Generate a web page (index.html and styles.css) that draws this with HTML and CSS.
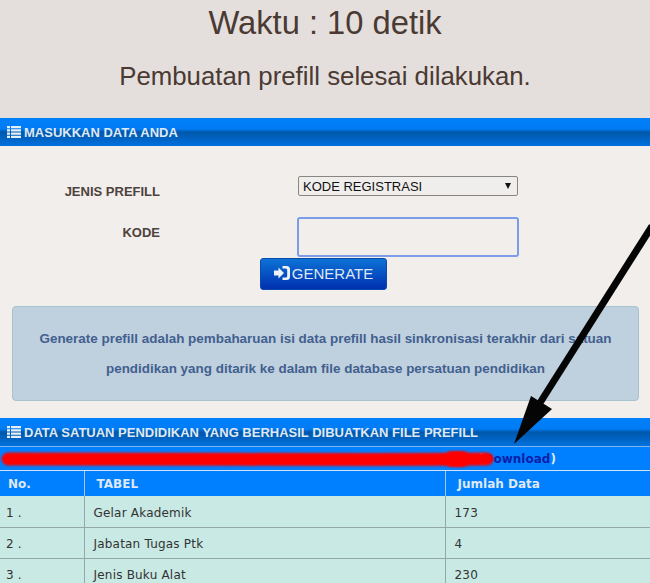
FILE: index.html
```html
<!DOCTYPE html>
<html lang="en">
<head>
  <meta charset="UTF-8">
  <title>Generate Prefill</title>
  <link rel="stylesheet" href="styles.css">
</head>
<body>
  <header class="top">
    <h1>Waktu : 10 detik</h1>
    <h2>Pembuatan prefill selesai dilakukan.</h2>
  </header>

  <div class="bar">
    <svg class="list-icon" viewBox="0 0 14 12"><path d="M0 0h3v2.2H0zM4 0h10v2.2H4zM0 3.3h3v2.2H0zM4 3.3h10v2.2H4zM0 6.6h3v2.2H0zM4 6.6h10v2.2H4zM0 9.8h3V12H0zM4 9.8h10V12H4z"/></svg>
    MASUKKAN DATA ANDA
  </div>

  <section class="form">
    <div class="form-row row-select">
      <label for="jenis">JENIS PREFILL</label>
      <div class="select-wrap">
        <select id="jenis"><option>KODE REGISTRASI</option></select>
      </div>
    </div>
    <div class="form-row row-kode">
      <label for="kode">KODE</label>
      <input type="text" id="kode">
    </div>
    <div class="form-actions">
      <button type="button" class="btn">
        <svg class="btn-icon" viewBox="0 0 16 14"><path d="M0 4.500h4.500V1.500L10 7l-5.500 5.500v-3H0z"/><path d="M8.500 0H12.500a3.500 3.500 0 0 1 3.500 3.500v7a3.500 3.500 0 0 1-3.500 3.500H8.500v-2.500h3.200a1.500 1.500 0 0 0 1.500-1.500V4a1.500 1.500 0 0 0-1.500-1.500H8.500z"/></svg>
        GENERATE
      </button>
    </div>
    <div class="info">Generate prefill adalah pembaharuan isi data prefill hasil sinkronisasi terakhir dari satuan<br>pendidikan yang ditarik ke dalam file database persatuan pendidikan</div>
  </section>

  <div class="bar">
    <svg class="list-icon" viewBox="0 0 14 12"><path d="M0 0h3v2.2H0zM4 0h10v2.2H4zM0 3.3h3v2.2H0zM4 3.3h10v2.2H4zM0 6.6h3v2.2H0zM4 6.6h10v2.2H4zM0 9.8h3V12H0zM4 9.8h10V12H4z"/></svg>
    DATA SATUAN PENDIDIKAN YANG BERHASIL DIBUATKAN FILE PREFILL
  </div>

  <div class="download">(<a href="#">Download</a>)</div>

  <table class="data">
    <thead>
      <tr><th>No.</th><th>TABEL</th><th>Jumlah Data</th></tr>
    </thead>
    <tbody>
      <tr><td>1 .</td><td>Gelar Akademik</td><td>173</td></tr>
      <tr><td>2 .</td><td>Jabatan Tugas Ptk</td><td>4</td></tr>
      <tr><td>3 .</td><td>Jenis Buku Alat</td><td>230</td></tr>
    </tbody>
  </table>

  <!-- markup drawn on top of the screenshot -->
  <svg class="markup" viewBox="0 0 650 583">
    <defs><filter id="soft" filterUnits="userSpaceOnUse" x="0" y="440" width="520" height="40"><feGaussianBlur stdDeviation="0.800"/></filter></defs>
    <path class="scribble" filter="url(#soft)" d="M8 459C120 459 250 459.500 370 459.500C420 459.500 450 459.500 487 459"/>
    <path class="scribble-end" filter="url(#soft)" d="M452 459L462 459"/>
    <path class="arrow-line" d="M652 226L538 406"/>
    <path class="arrow-head" d="M514 444L531 396L552 409z"/>
  </svg>
</body>
</html>
```

FILE: styles.css
```css
html, body {
  margin: 0;
  height: 100%;
  overflow: hidden;
}

body {
  position: relative;
  background-color: #f1eeeb;
  font-family: "Liberation Sans", Arial, sans-serif;
  color: #4a3a33;
}

.top {
  height: 118px;
  background-color: #e4dfdc;
  text-align: center;
  box-sizing: border-box;
  padding-top: 4px;
}

.top h1 {
  margin: 0;
  font-size: 32.700px;
  line-height: 38px;
  font-weight: normal;
}

.top h2 {
  margin: 19px 0 0;
  font-size: 25.800px;
  line-height: 30px;
  font-weight: normal;
}

.bar {
  height: 28px;
  box-sizing: border-box;
  padding-left: 7px;
  display: flex;
  align-items: center;
  gap: 3px;
  background: linear-gradient(#0080fb 0, #007cf5 11px, #0058aa 14px, #0062c0 20px, #0072e0 28px);
  color: #dfe8f5;
  font-size: 13px;
  font-weight: bold;
}

.list-icon {
  width: 14px;
  height: 12px;
  fill: #e6eef8;
}

.form {
  height: 272px;
  box-sizing: border-box;
  padding: 30px 11px 0 12px;
}

.form-row {
  display: flex;
}

.form-row label {
  width: 148px;
  text-align: right;
  font-size: 13px;
  font-weight: bold;
  color: #4d423c;
}

.row-select {
  height: 41px;
  gap: 138px;
}

.row-select label {
  padding-top: 8px;
}

.row-kode {
  gap: 137px;
}

.row-kode label {
  padding-top: 8px;
}

.select-wrap {
  position: relative;
  width: 220px;
  height: 20px;
}

.select-wrap::after {
  content: "";
  position: absolute;
  right: 7px;
  top: 7px;
  border-left: 3.500px solid transparent;
  border-right: 3.500px solid transparent;
  border-top: 6px solid #111;
}

select {
  display: block;
  width: 220px;
  height: 20px;
  box-sizing: border-box;
  padding: 0 0 0 4px;
  border: 1px solid #8a8580;
  border-radius: 2px;
  background-color: #efeeec;
  color: #111;
  font-family: "Liberation Sans", Arial, sans-serif;
  font-size: 13px;
  appearance: none;
}

input {
  width: 222px;
  height: 40px;
  box-sizing: border-box;
  border: 2px solid #7d9de8;
  border-radius: 3px;
  background-color: #f1eeeb;
  outline: none;
}

.form-actions {
  display: flex;
  padding-left: 248px;
  margin-top: 1px;
}

.btn {
  width: 127px;
  height: 32px;
  padding: 0 0 2px;
  display: flex;
  align-items: center;
  justify-content: center;
  gap: 2px;
  border: 1px solid #0a4aa8;
  border-radius: 3px;
  background: linear-gradient(#0d72d6, #0030b0);
  color: #dfe6f5;
  font-family: "Liberation Sans", Arial, sans-serif;
  font-size: 15px;
}

.btn-icon {
  width: 16px;
  height: 14px;
  fill: #eef2fa;
}

.info {
  height: 95px;
  box-sizing: border-box;
  margin-top: 16px;
  padding-top: 17px;
  border: 1px solid #a8c2ce;
  border-radius: 4px;
  background-color: #bfd0de;
  color: #42608f;
  font-size: 13.450px;
  font-weight: bold;
  line-height: 30px;
  text-align: center;
}

.download {
  height: 25px;
  box-sizing: border-box;
  padding-left: 478px;
  border-top: 1px solid #7fb4e8;
  border-bottom: 1px solid #cfe3f5;
  background-color: #0080ff;
  color: #dfe8f5;
  font-family: "DejaVu Sans", Verdana, sans-serif;
  font-size: 12px;
  font-weight: bold;
  line-height: 25px;
}

.download a {
  color: #0a1fa8;
  text-decoration: none;
}

.data {
  width: 100%;
  border-collapse: collapse;
  table-layout: fixed;
  font-family: "DejaVu Sans", Verdana, sans-serif;
}

.data th {
  height: 25px;
  padding: 0 0 0 12px;
  background-color: #0080ff;
  color: #dfe8f5;
  font-size: 12px;
  font-weight: bold;
  text-align: left;
  border-right: 1px solid #a3c8ea;
  box-sizing: border-box;
}

.data th:first-child {
  width: 84px;
  padding-left: 8px;
}

.data th:nth-child(2) {
  width: 361px;
}

.data th:last-child, .data td:last-child {
  border-right: none;
}

.data td {
  height: 31px;
  padding: 3px 0 0 9px;
  background-color: #c8e9e4;
  color: #333;
  font-size: 12px;
  letter-spacing: 0.2px;
  border-right: 1px solid #93a9a6;
  border-bottom: 1px solid #93a9a6;
  box-sizing: border-box;
}

.data td:first-child {
  padding-left: 6px;
}

.markup {
  position: absolute;
  left: 0;
  top: 0;
  width: 650px;
  height: 583px;
  pointer-events: none;
}

.scribble {
  fill: none;
  stroke: #ff0000;
  stroke-width: 13;
  stroke-linecap: round;
}

.scribble-end {
  fill: none;
  stroke: #ff0000;
  stroke-width: 16;
  stroke-linecap: round;
}

.arrow-line {
  fill: none;
  stroke: #050505;
  stroke-width: 7;
}

.arrow-head {
  fill: #050505;
}
```
